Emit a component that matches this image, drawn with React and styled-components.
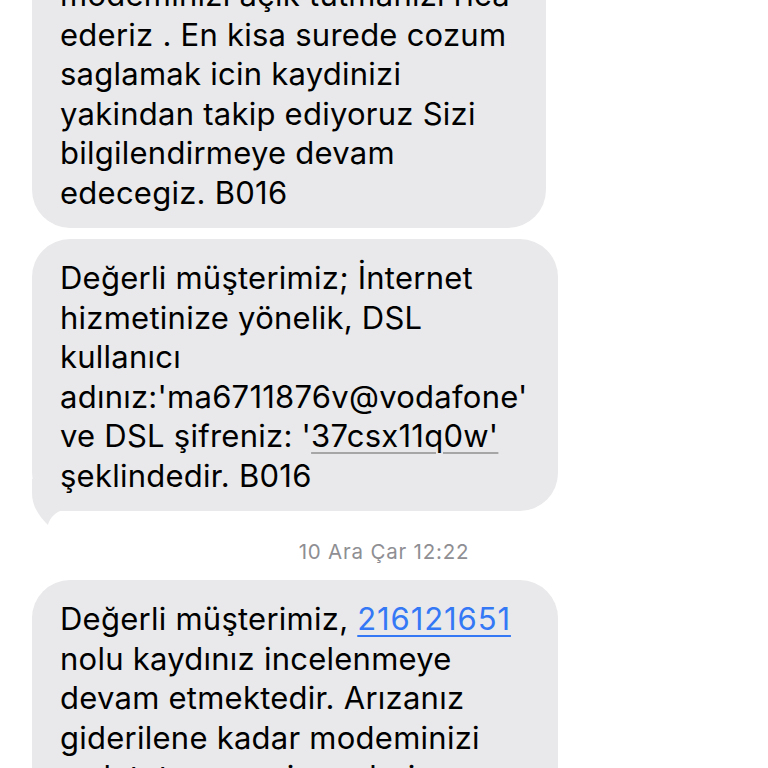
import styled, { createGlobalStyle } from "styled-components";

const Global = createGlobalStyle`
  html, body {
    margin: 0;
    padding: 0;
    background: #ffffff;
  }
  body {
    font-family: Inter, "Noto Sans", "Liberation Sans", sans-serif;
    -webkit-font-smoothing: antialiased;
  }
`;

const Screen = styled.div`
  width: 768px;
  height: 768px;
  overflow: hidden;
  background: #ffffff;
`;

const Thread = styled.div`
  display: flex;
  flex-direction: column;
  align-items: flex-start;
  padding: 0 32px;
  margin-top: -44px;
`;

const Bubble = styled.div`
  position: relative;
  box-sizing: border-box;
  width: ${(p) => p.$width}px;
  margin-top: ${(p) => p.$gap || 0}px;
  padding: 19px 28px 16px 28px;
  background: #e9e9eb;
  border-radius: 38px;
  color: #000000;
  font-size: 31px;
  line-height: 39.5px;
  letter-spacing: 0.25px;
  white-space: nowrap;
`;

const Line = styled.div`
  position: relative;
  z-index: 1;
`;

const Tail = styled.svg`
  position: absolute;
  z-index: 0;
  left: 0;
  bottom: -16px;
  width: 40px;
  height: 48px;
`;

const Stamp = styled.div`
  align-self: center;
  margin: 29px 0 16px 0;
  color: #8e8e93;
  font-size: 20.5px;
  line-height: 24px;
  letter-spacing: 0.8px;
`;

const Detected = styled.span`
  text-decoration: underline;
  text-decoration-color: #a6a6a6;
  text-decoration-thickness: 2px;
  text-underline-offset: 5px;
`;

const Link = styled.span`
  color: #3478f6;
  letter-spacing: 0.9px;
  text-decoration: underline;
  text-decoration-thickness: 2px;
  text-underline-offset: 5px;
`;

export default function App() {
  return (
    <Screen>
      <Global />
      <Thread>
        <Bubble $width={514}>
          <Line>modeminizi açık tutmanızı rica</Line>
          <Line>ederiz . En kisa surede cozum</Line>
          <Line>saglamak icin kaydinizi</Line>
          <Line>yakindan takip ediyoruz Sizi</Line>
          <Line>bilgilendirmeye devam</Line>
          <Line>edecegiz. B016</Line>
        </Bubble>
        <Bubble $width={526} $gap={11}>
          <Tail viewBox="0 0 40 48">
            <path
              d="M0 0 L0 14 C0 28 8 38 16 46 C17 41 21 35 28 32 L40 32 L40 0 Z"
              fill="#e9e9eb"
            />
          </Tail>
          <Line>Değerli müşterimiz; İnternet</Line>
          <Line>hizmetinize yönelik, DSL</Line>
          <Line>kullanıcı</Line>
          <Line>adınız:'ma6711876v@vodafone'</Line>
          <Line>
            ve DSL şifreniz: '<Detected>37csx11q0w'</Detected>
          </Line>
          <Line>şeklindedir. B016</Line>
        </Bubble>
        <Stamp>10 Ara Çar 12:22</Stamp>
        <Bubble $width={526}>
          <Line>
            Değerli müşterimiz, <Link>216121651</Link>
          </Line>
          <Line>nolu kaydınız incelenmeye</Line>
          <Line>devam etmektedir. Arızanız</Line>
          <Line>giderilene kadar modeminizi</Line>
          <Line>açık tutmanızı rica ederiz</Line>
        </Bubble>
      </Thread>
    </Screen>
  );
}
